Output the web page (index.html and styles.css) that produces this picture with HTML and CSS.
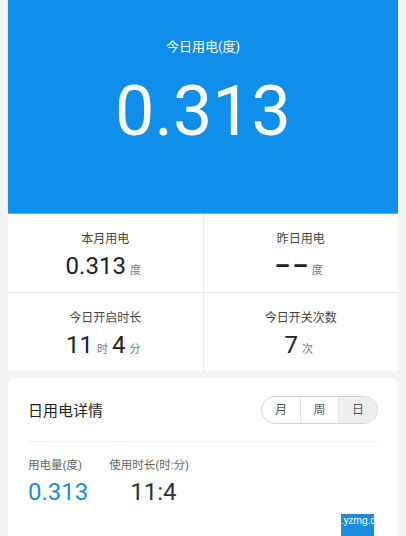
FILE: index.html
```html
<!DOCTYPE html>
<html lang="zh-CN">
<head>
    <meta charset="UTF-8">
    <meta name="viewport" content="width=device-width, initial-scale=1.0">
    <title>用电统计</title>
    <link rel="stylesheet" href="styles.css">
</head>
<body>
    <div id="page">
        <div class="hero">
            <div class="hero-label">今日用电(度)</div>
            <div class="hero-value">0.313</div>
        </div>

        <div class="stats">
            <div class="stat">
                <div class="stat-label">本月用电</div>
                <div class="stat-value">0.313<span class="unit">度</span></div>
            </div>
            <div class="stat">
                <div class="stat-label">昨日用电</div>
                <div class="stat-value"><span class="dash">– –</span><span class="unit">度</span></div>
            </div>
            <div class="stat">
                <div class="stat-label">今日开启时长</div>
                <div class="stat-value">11<span class="unit">时</span>4<span class="unit">分</span></div>
            </div>
            <div class="stat">
                <div class="stat-label">今日开关次数</div>
                <div class="stat-value">7<span class="unit">次</span></div>
            </div>
        </div>

        <div class="card">
            <div class="card-head">
                <div class="card-title">日用电详情</div>
                <div class="tabs">
                    <span class="tab">月</span>
                    <span class="tab">周</span>
                    <span class="tab active">日</span>
                </div>
            </div>
            <div class="summary">
                <div class="summary-item">
                    <div class="summary-label">用电量(度)</div>
                    <div class="summary-value blue">0.313</div>
                </div>
                <div class="summary-item">
                    <div class="summary-label">使用时长(时:分)</div>
                    <div class="summary-value time">11:4</div>
                </div>
            </div>
            <div class="mark">.yzmg.c</div>
        </div>
    </div>
</body>
</html>
```

FILE: styles.css
```css
body {
    margin: 0;
    background: #f4f4f4;
    font-family: Roboto, "Noto Sans CJK SC", sans-serif;
    color: #333;
}

#page {
    margin: 0 8px;
}

.hero {
    height: 214px;
    background: #108fea;
    border-bottom: 1px solid #5bb4f2;
    color: #fff;
    text-align: center;
    box-sizing: border-box;
    padding-top: 37px;
}

.hero-label {
    font-size: 13px;
    line-height: 20px;
}

.hero-value {
    font-size: 70px;
    line-height: 86px;
    margin-top: 11px;
}

.stats {
    display: grid;
    grid-template-columns: 1fr 1fr;
    gap: 1px;
    background: #eaeaea;
}

.stat {
    background: #fff;
    height: 78px;
    text-align: center;
    box-sizing: border-box;
    padding-top: 16px;
}

.stat-label {
    font-size: 12px;
    line-height: 18px;
    color: #444;
}

.stat-value {
    font-size: 24px;
    line-height: 30px;
    margin-top: 3px;
    color: #222;
}

.dash {
    word-spacing: -3px;
    font-weight: 700;
}

.unit {
    font-size: 11px;
    color: #777;
    margin: 0 4px;
}

.card {
    position: relative;
    margin-top: 7px;
    background: #fff;
    border-radius: 8px 8px 0 0;
    padding: 0 20px;
    height: 159px;
}

.card-head {
    display: flex;
    justify-content: space-between;
    align-items: center;
    height: 63px;
    border-bottom: 1px solid #ececec;
}

.card-title {
    font-size: 15px;
    color: #222;
}

.tabs {
    display: flex;
    border: 1px solid #d4d4d4;
    border-radius: 14px;
    overflow: hidden;
    height: 26px;
}

.tab {
    width: 38px;
    box-sizing: border-box;
    line-height: 26px;
    text-align: center;
    font-size: 12px;
    color: #555;
    border-left: 1px solid #e2e2e2;
}

.tab:first-child {
    border-left: none;
}

.tab.active {
    width: 39px;
    background: #efefef;
}

.summary {
    display: flex;
    gap: 21px;
    padding-top: 15px;
}

.summary-label {
    font-size: 11.5px;
    line-height: 16px;
    color: #666;
}

.summary-value {
    font-size: 24px;
    line-height: 30px;
    margin-top: 4px;
}

.summary-value.blue {
    color: #1a8de0;
}

.summary-value.time {
    color: #333;
    padding-left: 21px;
}

.mark {
    position: absolute;
    left: 333px;
    top: 136px;
    width: 33px;
    height: 30px;
    background: #1a8de0;
    color: #fff;
    font-size: 10px;
    overflow: hidden;
    white-space: nowrap;
    padding-top: 1px;
}
```
